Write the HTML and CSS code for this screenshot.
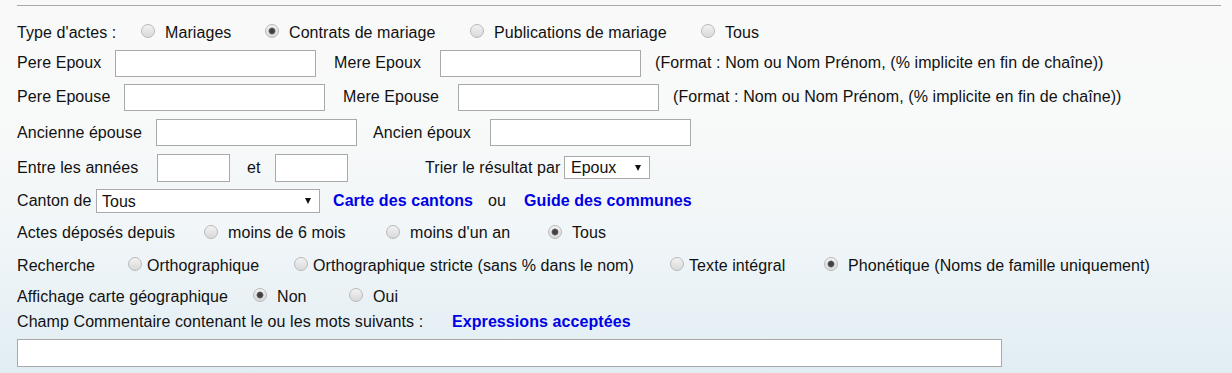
FILE: index.html
```html
<!DOCTYPE html>
<html lang="fr">
<head>
    <meta charset="UTF-8">
    <title>Recherche d'actes de mariage</title>
    <link rel="stylesheet" href="styles.css">
</head>
<body>
    <div class="page">
        <div class="rule"></div>
        <form class="search">
            <div class="row r-type">
                <span>Type d'actes :</span>
                <label class="opt"><input type="radio" name="type"> Mariages</label>
                <label class="opt"><input type="radio" name="type" checked> Contrats de mariage</label>
                <label class="opt"><input type="radio" name="type"> Publications de mariage</label>
                <label class="opt"><input type="radio" name="type"> Tous</label>
            </div>
            <div class="row r-pere-epoux">
                <span>Pere Epoux</span>
                <input class="field wide" type="text">
                <span>Mere Epoux</span>
                <input class="field wide" type="text">
                <span>(Format : Nom ou Nom Prénom, (% implicite en fin de chaîne))</span>
            </div>
            <div class="row r-pere-epouse">
                <span>Pere Epouse</span>
                <input class="field wide" type="text">
                <span>Mere Epouse</span>
                <input class="field wide" type="text">
                <span>(Format : Nom ou Nom Prénom, (% implicite en fin de chaîne))</span>
            </div>
            <div class="row r-ancien">
                <span>Ancienne épouse</span>
                <input class="field wide" type="text">
                <span>Ancien époux</span>
                <input class="field wide" type="text">
            </div>
            <div class="row r-annees">
                <span>Entre les années</span>
                <input class="field year" type="text">
                <span>et</span>
                <input class="field year" type="text">
                <span>Trier le résultat par</span>
                <span class="select-wrap sort">
                    <select class="select">
                        <option>Epoux</option>
                        <option>Epouse</option>
                        <option>Date</option>
                    </select>
                    <span class="caret"></span>
                </span>
            </div>
            <div class="row r-canton">
                <span>Canton de</span>
                <span class="select-wrap canton">
                    <select class="select">
                        <option>Tous</option>
                    </select>
                    <span class="caret"></span>
                </span>
                <a class="link" href="#">Carte des cantons</a>
                <span>ou</span>
                <a class="link" href="#">Guide des communes</a>
            </div>
            <div class="row r-depot">
                <span>Actes déposés depuis</span>
                <label class="opt"><input type="radio" name="depot"> moins de 6 mois</label>
                <label class="opt"><input type="radio" name="depot"> moins d'un an</label>
                <label class="opt"><input type="radio" name="depot" checked> Tous</label>
            </div>
            <div class="row r-recherche">
                <span>Recherche</span>
                <label class="opt tight"><input type="radio" name="mode"> Orthographique</label>
                <label class="opt tight"><input type="radio" name="mode"> Orthographique stricte (sans % dans le nom)</label>
                <label class="opt tight"><input type="radio" name="mode"> Texte intégral</label>
                <label class="opt"><input type="radio" name="mode" checked> Phonétique (Noms de famille uniquement)</label>
            </div>
            <div class="row r-carte">
                <span>Affichage carte géographique</span>
                <label class="opt"><input type="radio" name="carte" checked> Non</label>
                <label class="opt"><input type="radio" name="carte"> Oui</label>
            </div>
            <div class="row r-comment">
                <span>Champ Commentaire contenant le ou les mots suivants :</span>
                <a class="link" href="#">Expressions acceptées</a>
            </div>
            <div class="row r-comment-field">
                <input class="field full" type="text">
            </div>
        </form>
    </div>
</body>
</html>
```

FILE: styles.css
```css
html {
    height: 100%;
}
body {
    margin: 0;
    min-height: 100%;
    background: linear-gradient(#f9f9f9 0, #f8f9f9 120px, #f1f6f8 230px, #e1edf3 373px);
    color: #111;
    font-family: "Liberation Sans", Arial, sans-serif;
    font-size: 16px;
    letter-spacing: 0.08px;
}
.page {
    padding: 5px 11px 0 17px;
}
.rule {
    border-top: 1px solid #a9a9a9;
    margin-bottom: 11px;
}
.row {
    display: grid;
    align-items: center;
    justify-items: start;
    white-space: nowrap;
}
.r-type { grid-template-columns: 124px 124px 205px 231px auto; height: 31px; }
.r-pere-epoux { grid-template-columns: 98px 219px 106px 215px auto; height: 30px; }
.r-pere-epouse { grid-template-columns: 107px 219px 115px 215px auto; height: 38px; }
.r-ancien { grid-template-columns: 139px 217px 117px auto; height: 33px; }
.r-annees { grid-template-columns: 140px 90px 28px 150px 139px auto; height: 37px; }
.r-canton { grid-template-columns: 79px 237px 155px 36px auto; height: 30px; }
.r-depot { grid-template-columns: 187px 182px 162px auto; height: 34px; }
.r-recherche { grid-template-columns: 111px 166px 376px 154px auto; height: 31px; }
.r-carte { grid-template-columns: 236px 96px auto; height: 31px; }
.r-comment { grid-template-columns: 435px auto; height: 20px; }
.r-comment-field { padding-top: 7px; }

.opt {
    display: flex;
    align-items: center;
}
.opt input[type="radio"] {
    appearance: none;
    -webkit-appearance: none;
    box-sizing: border-box;
    width: 14px;
    height: 14px;
    margin: 0 10px 3px 0;
    border: 1px solid #b9b9b9;
    border-radius: 50%;
    background: linear-gradient(#f2f2f2, #d9d9d9);
}
.opt.tight input[type="radio"] {
    margin-right: 5px;
}
.opt input[type="radio"]:checked {
    background:
        radial-gradient(circle, #3a3a3a 0, #4a4a4a 2.5px, #7a7a7a 3.2px, transparent 3.8px),
        linear-gradient(#f2f2f2, #d9d9d9);
}

.field {
    box-sizing: border-box;
    height: 27px;
    margin: 0;
    padding: 2px 4px;
    border: 1px solid #a9a9a9;
    background: #fff;
    font: inherit;
}
.wide { width: 201px; }
.year { width: 73px; height: 28px; }
.full { width: 985px; height: 28px; }

.select-wrap {
    position: relative;
    display: block;
}
.select {
    appearance: none;
    -webkit-appearance: none;
    box-sizing: border-box;
    display: block;
    margin: 0;
    border: 1px solid #a9a9a9;
    border-radius: 0;
    background: #fff;
    color: #111;
    font: inherit;
}
.sort .select {
    width: 86px;
    height: 23px;
    padding: 0 0 0 6px;
}
.canton .select {
    width: 224px;
    height: 24px;
    padding: 0 0 0 5px;
}
.caret {
    position: absolute;
    top: 50%;
    right: 9px;
    margin-top: -3px;
    width: 0;
    height: 0;
    border-left: 3.5px solid transparent;
    border-right: 3.5px solid transparent;
    border-top: 6px solid #111;
    pointer-events: none;
}

.link {
    color: #0000e6;
    font-weight: bold;
    text-decoration: none;
}
```
